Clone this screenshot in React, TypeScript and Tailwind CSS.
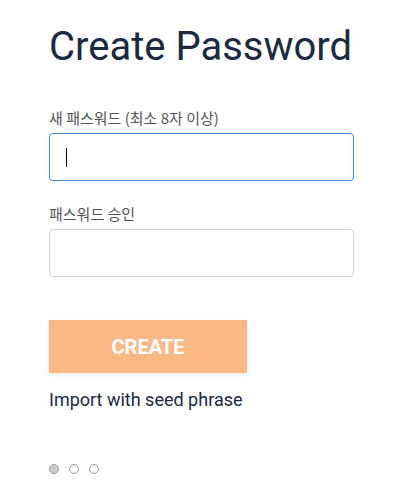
export default function App() {
  return (
    <div className="w-[411px] h-[497px] bg-white font-['Roboto',sans-serif]">
      <div className="flex flex-col w-[305px] ml-[49px] pt-[23px]">
        <h1 className="text-[40px] leading-[48px] text-[#1b2a3f] whitespace-nowrap">
          Create Password
        </h1>

        <label className="mt-[36px] text-[15px] leading-[22px] text-[#555] font-['Noto_Sans_CJK_KR',sans-serif]">
          새 패스워드 (최소 8자 이상)
        </label>
        <div className="mt-[4px] h-[48px] rounded-[4px] border border-[#3a8ee0] flex items-center pl-[16px]">
          <div className="w-px h-[19px] bg-black" />
        </div>

        <label className="mt-[22px] text-[15px] leading-[22px] text-[#555] font-['Noto_Sans_CJK_KR',sans-serif]">
          패스워드 승인
        </label>
        <div className="mt-[4px] h-[48px] rounded-[4px] border border-[#cdd3dc]" />

        <button className="mt-[43px] w-[198px] h-[53px] bg-[#f9b884] text-white font-bold text-[20px] shadow-[0_2px_4px_rgba(0,0,0,0.08)]">
          CREATE
        </button>

        <div className="mt-[15px] text-[18px] leading-[24px] text-[#1b2a3f]">
          Import with seed phrase
        </div>

        <div className="flex gap-[10px] mt-[52px]">
          <span className="w-[10px] h-[10px] rounded-full border border-[#999] bg-[#ccc]" />
          <span className="w-[10px] h-[10px] rounded-full border border-[#999] bg-white" />
          <span className="w-[10px] h-[10px] rounded-full border border-[#999] bg-white" />
        </div>
      </div>
    </div>
  );
}
